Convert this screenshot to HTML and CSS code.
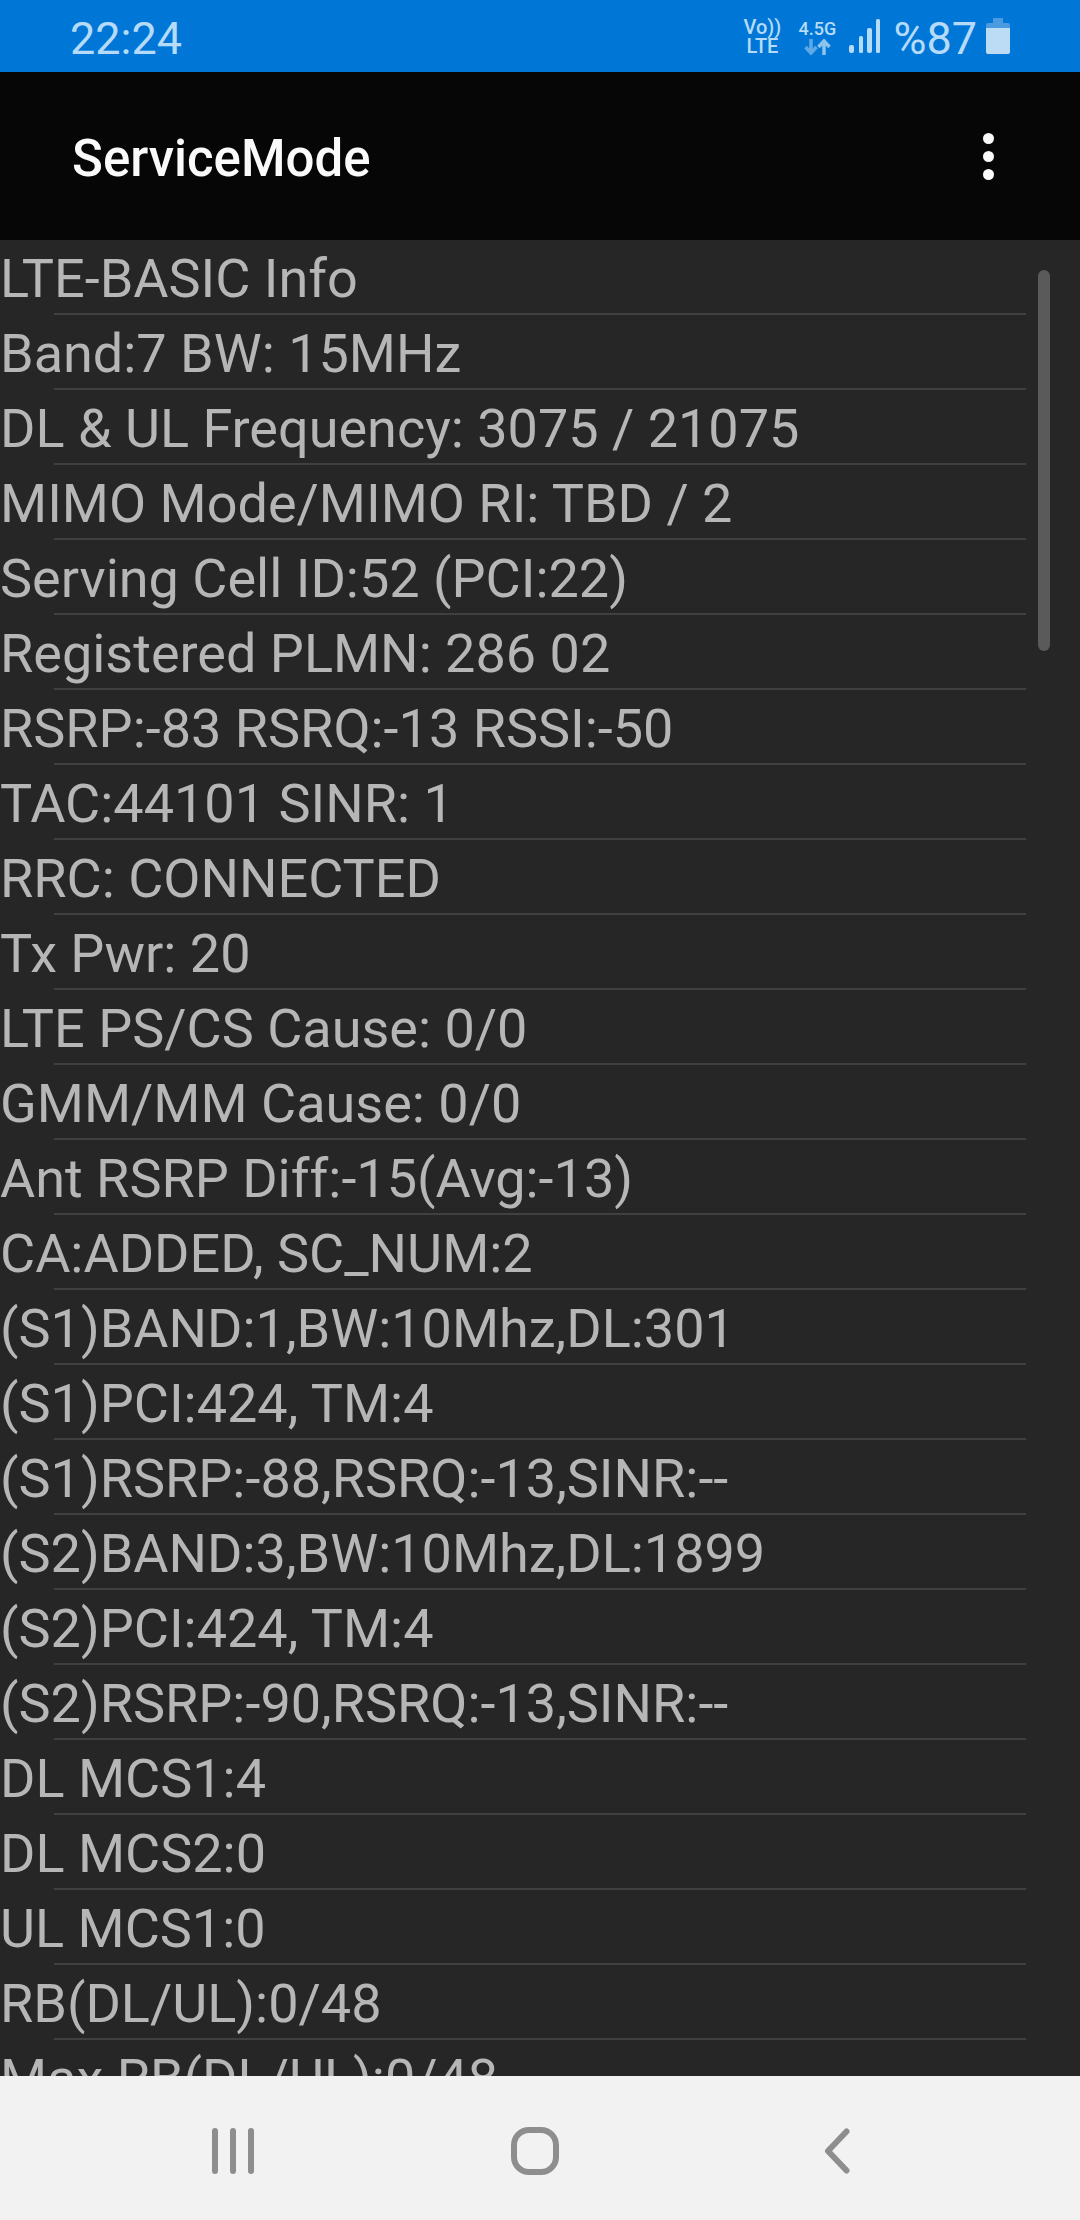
FILE: index.html
```html
<!DOCTYPE html>
<html lang="en">
<head>
  <meta charset="UTF-8">
  <title>ServiceMode</title>
  <link rel="stylesheet" href="styles.css">
</head>
<body>
  <div class="screen">
    <div class="status-bar">
      <span class="clock">22:24</span>
      <div class="status-icons">
        <div class="volte"><span>Vo))</span><span>LTE</span></div>
        <div class="net">
          <span>4.5G</span>
          <svg width="27" height="16" viewBox="0 0 27 16">
            <path d="M7 0v13M1.5 8l5.5 6 5.5-6" fill="none" stroke="#5fa8e6" stroke-width="3.5"/>
            <path d="M20 16V3M14.5 8L20 2l5.5 6" fill="none" stroke="#8cc4f0" stroke-width="3.5"/>
          </svg>
        </div>
        <svg class="signal" width="31" height="34" viewBox="0 0 31 34">
          <rect x="0" y="26" width="5" height="8" rx="2" fill="#b5dbf8"/>
          <rect x="10" y="17" width="4" height="17" rx="1.5" fill="#b5dbf8"/>
          <rect x="18" y="9" width="5" height="25" rx="2" fill="#b5dbf8"/>
          <rect x="27" y="0" width="4" height="34" rx="1.5" fill="#b5dbf8"/>
        </svg>
        <span class="battery-text">%87</span>
        <svg class="battery" width="24" height="36" viewBox="0 0 24 36">
          <path d="M7 0h10v5H7z" fill="#4a9ae0"/>
          <path d="M2 5h20a2 2 0 0 1 2 2v3H0V7a2 2 0 0 1 2-2z" fill="#4a9ae0"/>
          <path d="M0 10h24v24a2 2 0 0 1-2 2H2a2 2 0 0 1-2-2z" fill="#bcdcf6"/>
        </svg>
      </div>
    </div>

    <div class="app-bar">
      <h1 class="title">ServiceMode</h1>
      <div class="menu"><i></i><i></i><i></i></div>
    </div>

    <div class="list-wrap">
      <ul class="list">
        <li>LTE-BASIC Info</li>
        <li>Band:7 BW: 15MHz</li>
        <li>DL &amp; UL Frequency: 3075 / 21075</li>
        <li>MIMO Mode/MIMO RI: TBD / 2</li>
        <li>Serving Cell ID:52 (PCI:22)</li>
        <li>Registered PLMN: 286 02</li>
        <li>RSRP:-83 RSRQ:-13 RSSI:-50</li>
        <li>TAC:44101 SINR: 1</li>
        <li>RRC: CONNECTED</li>
        <li>Tx Pwr: 20</li>
        <li>LTE PS/CS Cause: 0/0</li>
        <li>GMM/MM Cause: 0/0</li>
        <li>Ant RSRP Diff:-15(Avg:-13)</li>
        <li>CA:ADDED, SC_NUM:2</li>
        <li>(S1)BAND:1,BW:10Mhz,DL:301</li>
        <li>(S1)PCI:424, TM:4</li>
        <li>(S1)RSRP:-88,RSRQ:-13,SINR:--</li>
        <li>(S2)BAND:3,BW:10Mhz,DL:1899</li>
        <li>(S2)PCI:424, TM:4</li>
        <li>(S2)RSRP:-90,RSRQ:-13,SINR:--</li>
        <li>DL MCS1:4</li>
        <li>DL MCS2:0</li>
        <li>UL MCS1:0</li>
        <li>RB(DL/UL):0/48</li>
        <li>Max RB(DL/UL):0/48</li>
      </ul>
      <div class="scrollbar"></div>
    </div>

    <div class="nav-bar">
      <svg width="42" height="46" viewBox="0 0 42 46">
        <path d="M3 3v40M21 3v40M39 3v40" fill="none" stroke="#8e8e8e" stroke-width="6" stroke-linecap="round"/>
      </svg>
      <svg width="48" height="48" viewBox="0 0 48 48">
        <rect x="3" y="3" width="42" height="42" rx="15" fill="none" stroke="#8e8e8e" stroke-width="6"/>
      </svg>
      <svg width="26" height="46" viewBox="0 0 26 46">
        <path d="M22.5 3.5L4 23l18.5 19.5" fill="none" stroke="#8e8e8e" stroke-width="6" stroke-linecap="round" stroke-linejoin="round"/>
      </svg>
    </div>
  </div>
</body>
</html>
```

FILE: styles.css
```css
html, body {
  margin: 0;
  padding: 0;
}
body {
  font-family: Roboto, "Noto Sans", sans-serif;
  background: #262626;
}
.screen {
  width: 1080px;
  height: 2220px;
  display: flex;
  flex-direction: column;
  overflow: hidden;
}
.status-bar {
  height: 72px;
  background: #0077d6;
  color: #b5dbf8;
  display: flex;
  align-items: center;
  justify-content: space-between;
  padding: 0 70px;
}
.clock {
  font-size: 45px;
  margin-top: 4px;
}
.status-icons {
  display: flex;
  align-items: center;
}
.volte {
  display: flex;
  flex-direction: column;
  align-items: center;
  margin-top: 1px;
  font-size: 20px;
  font-weight: 500;
  line-height: 19px;
  width: 36px;
}
.net {
  display: flex;
  flex-direction: column;
  align-items: center;
  font-size: 18px;
  font-weight: 500;
  line-height: 19px;
  margin: 2px 0 0 18px;
  width: 38px;
}
.net svg {
  margin-top: 1px;
}
.signal {
  margin-left: 13px;
}
.battery-text {
  font-size: 45px;
  margin: 4px 0 0 13px;
}
.battery {
  margin-left: 9px;
}
.app-bar {
  height: 168px;
  background: #060606;
  display: flex;
  align-items: center;
  justify-content: space-between;
  padding: 0 86px 0 72px;
}
.title {
  margin: 4px 0 0;
  font-size: 51px;
  font-weight: 500;
  color: #fafafa;
}
.menu {
  display: flex;
  flex-direction: column;
  gap: 7px;
}
.menu i {
  display: block;
  width: 11px;
  height: 11px;
  border-radius: 50%;
  background: #fafafa;
}
.list-wrap {
  position: relative;
  height: 1836px;
  overflow: hidden;
  background: #262626;
}
.list {
  list-style: none;
  margin: 0;
  padding: 0;
}
.list li {
  height: 75px;
  box-sizing: border-box;
  padding-top: 4px;
  font-size: 54px;
  line-height: 69px;
  color: #b6b6b6;
  white-space: nowrap;
}
.list li::after {
  content: "";
  display: block;
  height: 2px;
  margin: 0 54px;
  background: #404040;
}
.scrollbar {
  position: absolute;
  top: 30px;
  right: 30px;
  width: 12px;
  height: 381px;
  border-radius: 6px;
  background: #5a5a5a;
}
.nav-bar {
  height: 144px;
  box-sizing: border-box;
  padding-top: 6px;
  background: #f2f2f2;
  display: flex;
  align-items: center;
}
.nav-bar svg:nth-child(1) {
  margin-left: 212px;
}
.nav-bar svg:nth-child(2) {
  margin-left: 257px;
}
.nav-bar svg:nth-child(3) {
  margin-left: 265px;
}
```
